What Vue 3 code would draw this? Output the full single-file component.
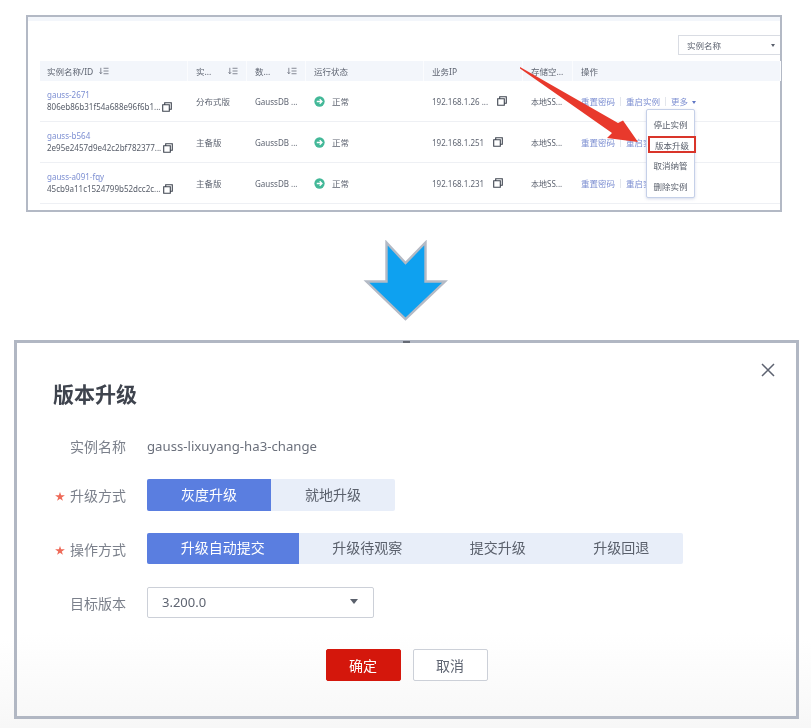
<script setup>
const columns = [
  { label: '实例名称/ID', sort: 'near' },
  { label: '实...', sort: 'end' },
  { label: '数...', sort: 'end' },
  { label: '运行状态' },
  { label: '业务IP' },
  { label: '存储空...' },
  { label: '操作' },
]

const instances = [
  { name: 'gauss-2671', id: '806eb86b31f54a688e96f6b1...', type: '分布式版', ip: '192.168.1.26 ...' },
  { name: 'gauss-b564', id: '2e95e2457d9e42c2bf782377...', type: '主备版', ip: '192.168.1.251' },
  { name: 'gauss-a091-fqy', id: '45cb9a11c1524799b52dcc2c...', type: '主备版', ip: '192.168.1.231' },
]

const menuItems = ['停止实例', '版本升级', '取消纳管', '删除实例']
const upgradeModes = ['灰度升级', '就地升级']
const operationModes = ['升级自动提交', '升级待观察', '提交升级', '升级回退']
</script>

<template>
  <div class="page">
    <section class="panel">
      <div class="panel-strip"></div>
      <div class="toolbar">
        <div class="filter-select">
          <span>实例名称</span>
          <i class="caret caret--small"></i>
        </div>
      </div>

      <div class="table">
        <div class="table-row table-row--head">
          <div
            v-for="col in columns"
            :key="col.label"
            class="table-cell"
            :class="{ 'table-cell--spread': col.sort === 'end' }"
          >
            <span>{{ col.label }}</span>
            <svg v-if="col.sort" class="sort-icon" viewBox="0 0 11 8" aria-hidden="true">
              <path d="M2 0.5V7M0.6 5.4L2 7L3.4 5.4M5 1H10.5M5 4H10.5M5 7H10.5" fill="none" stroke="#5c6270" stroke-width="0.8" />
            </svg>
          </div>
        </div>

        <div v-for="item in instances" :key="item.name" class="table-row">
          <div class="table-cell table-cell--name">
            <a class="link">{{ item.name }}</a>
            <div class="id-line">
              <span>{{ item.id }}</span>
              <svg class="copy-icon" viewBox="0 0 10 10" aria-hidden="true">
                <path d="M0.7 2.7H7.3V9.3H0.7ZM2.7 2.7V0.7H9.3V7.3H7.3" fill="none" stroke="#3f4550" stroke-width="1.1" />
              </svg>
            </div>
          </div>
          <div class="table-cell">{{ item.type }}</div>
          <div class="table-cell table-cell--latin">GaussDB ...</div>
          <div class="table-cell table-cell--status">
            <svg class="status-icon" viewBox="0 0 12 12" aria-hidden="true">
              <circle cx="6" cy="6" r="5.6" fill="#43b898" />
              <path d="M3 6H8.4M6.2 3.6L8.7 6L6.2 8.4" fill="none" stroke="#fff" stroke-width="1.4" />
            </svg>
            <span>正常</span>
          </div>
          <div class="table-cell table-cell--ip">
            <span>{{ item.ip }}</span>
            <svg class="copy-icon" viewBox="0 0 10 10" aria-hidden="true">
              <path d="M0.7 2.7H7.3V9.3H0.7ZM2.7 2.7V0.7H9.3V7.3H7.3" fill="none" stroke="#3f4550" stroke-width="1.1" />
            </svg>
          </div>
          <div class="table-cell table-cell--latin">本地SS...</div>
          <div class="table-cell table-cell--ops">
            <a class="link">重置密码</a>
            <i class="divider"></i>
            <a class="link">{{ item.name === 'gauss-2671' ? '重启实例' : '重启实' }}</a>
            <template v-if="item.name === 'gauss-2671'">
              <i class="divider"></i>
              <a class="link">更多 <i class="caret caret--link"></i></a>
            </template>
          </div>
        </div>
      </div>

      <ul class="menu">
        <li
          v-for="entry in menuItems"
          :key="entry"
          class="menu-item"
          :class="{ 'menu-item--marked': entry === '版本升级' }"
        >
          {{ entry }}
        </li>
      </ul>

      <svg class="pointer" viewBox="0 0 120 80" aria-hidden="true">
        <polygon points="0,1 98,57 103,54.5 118,76 87,72 92,67 0,2.5" fill="#e8392c" />
      </svg>
    </section>

    <div class="transition">
      <svg class="down-arrow" viewBox="0 0 85 82" aria-hidden="true">
        <polygon points="23.5,2.5 42.5,23 62.5,2.5 62.5,41.5 82,41.5 42.5,79 3.5,41.5 23.5,41.5" fill="#0ea1f0" stroke="#b4bac5" stroke-width="2.4" />
      </svg>
    </div>

    <section class="dialog">
      <i class="dialog-tick"></i>
      <svg class="dialog-close" viewBox="0 0 14 14" aria-hidden="true">
        <path d="M1 1L13 13M13 1L1 13" fill="none" stroke="#5d6270" stroke-width="1.5" />
      </svg>

      <h2 class="dialog-title">版本升级</h2>

      <div class="form-row form-row--name">
        <label class="form-label">实例名称</label>
        <span class="form-value">gauss-lixuyang-ha3-change</span>
      </div>

      <div class="form-row form-row--mode">
        <label class="form-label"><em>★</em>升级方式</label>
        <div class="segments">
          <button
            v-for="(mode, i) in upgradeModes"
            :key="mode"
            class="segment segment--wide"
            :class="{ 'segment--on': i === 0 }"
            type="button"
          >
            {{ mode }}
          </button>
        </div>
      </div>

      <div class="form-row form-row--op">
        <label class="form-label"><em>★</em>操作方式</label>
        <div class="segments">
          <button
            v-for="(mode, i) in operationModes"
            :key="mode"
            class="segment"
            :class="{ 'segment--on': i === 0 }"
            type="button"
          >
            {{ mode }}
          </button>
        </div>
      </div>

      <div class="form-row form-row--version">
        <label class="form-label">目标版本</label>
        <div class="version-select">
          <span>3.200.0</span>
          <i class="caret"></i>
        </div>
      </div>

      <div class="dialog-actions">
        <button class="btn btn--primary" type="button">确定</button>
        <button class="btn" type="button">取消</button>
      </div>
    </section>
  </div>
</template>

<style>
html,
body {
  background: #fff;
}
</style>

<style scoped>
.page {
  width: 811px;
  height: 728px;
  padding-top: 15px;
  box-sizing: border-box;
  overflow: hidden;
  background: linear-gradient(180deg, #fff 0, #fff 640px, #f7f7f7 728px);
  font-family: "Noto Sans", "Noto Sans CJK SC", sans-serif;
  color: #5f6572;
  filter: blur(0.5px);
}

/* top screenshot: instance list */
.panel {
  position: relative;
  width: 756px;
  height: 197px;
  margin-left: 26px;
  box-sizing: border-box;
  border: 2px solid #b3b9c5;
  background: #fff;
  font-size: 8.5px;
}

.panel-strip {
  height: 4px;
  background: #f3f6fb;
}

.toolbar {
  display: flex;
  justify-content: flex-end;
  height: 40px;
  padding-top: 14px;
  box-sizing: border-box;
}

.filter-select {
  display: flex;
  align-items: center;
  justify-content: space-between;
  width: 102px;
  height: 20px;
  padding: 0 5px 0 8px;
  box-sizing: border-box;
  border: 1px solid #d9dce3;
  border-right: 0;
}

.table {
  margin-left: 12px;
}

.table-row {
  display: grid;
  grid-template-columns: 148px 59px 59px 118px 99px 50px 208px;
  height: 41px;
  border-bottom: 1px solid #eef0f4;
  box-sizing: border-box;
}

.table-row--head {
  height: 20px;
  background: #f3f6fb;
  border-bottom: 0;
}

.table-row--head .table-cell {
  border-right: 1px solid #fbfcfe;
}

.table-cell {
  display: flex;
  align-items: center;
  gap: 6px;
  padding-left: 8px;
  min-width: 0;
  white-space: nowrap;
}

.table-cell:first-child {
  padding-left: 7px;
}

.table-cell--latin {
  font-size: 8px;
}

.table-cell--spread {
  justify-content: space-between;
  padding-right: 8px;
}

.table-cell--name {
  flex-direction: column;
  align-items: flex-start;
  justify-content: center;
  gap: 0;
  font-size: 8px;
  line-height: 12px;
}

.id-line {
  display: flex;
  align-items: center;
  gap: 2px;
  color: #565c68;
}

.table-cell--status {
  gap: 7px;
}

.table-cell--ip {
  gap: 9px;
  font-size: 8px;
}

.table-cell--ops {
  gap: 5px;
}

.link {
  color: #7d8fd2;
}

.divider {
  width: 1px;
  height: 9px;
  background: #e3e6ec;
}

.sort-icon {
  width: 10px;
  height: 8px;
  flex: none;
}

.copy-icon {
  width: 10px;
  height: 10px;
  flex: none;
}

.status-icon {
  width: 11px;
  height: 11px;
  flex: none;
}

.caret {
  display: inline-block;
  width: 0;
  height: 0;
  border-style: solid;
  border-width: 5px 4.5px 0;
  border-color: #5a606c transparent transparent;
}

.caret--small {
  border-width: 3px 2.5px 0;
}

.caret--link {
  margin-left: 2px;
  vertical-align: 1px;
  border-width: 3px 2.5px 0;
  border-top-color: #5f76c4;
}

.menu {
  position: absolute;
  left: 618px;
  top: 92px;
  width: 49px;
  height: 89px;
  margin: 0;
  padding: 5.5px 0 0;
  box-sizing: border-box;
  display: flex;
  flex-direction: column;
  gap: 3.7px;
  list-style: none;
  background: #fff;
  border: 1px solid #c5d0e8;
  border-radius: 2px;
  box-shadow: 0 1px 3px rgba(90, 110, 170, 0.25);
}

.menu-item {
  display: flex;
  align-items: center;
  justify-content: center;
  height: 17px;
  width: 47px;
  flex: none;
  color: #5a606c;
}

.menu-item--marked {
  width: 48px;
  margin-left: 1px;
  box-sizing: border-box;
  border: 2px solid #d9352a;
}

.pointer {
  position: absolute;
  left: 492px;
  top: 49px;
  width: 120px;
  height: 80px;
}

/* big arrow between the two screenshots */
.transition {
  display: flex;
  justify-content: center;
  align-items: flex-start;
  height: 128px;
  padding-top: 28px;
  box-sizing: border-box;
}

.down-arrow {
  width: 85px;
  height: 82px;
  flex: none;
}

/* bottom screenshot: upgrade dialog */
.dialog {
  position: relative;
  display: flex;
  flex-direction: column;
  width: 785px;
  height: 379px;
  margin-left: 14px;
  padding: 36px 0 0;
  box-sizing: border-box;
  border: 3px solid #b1b7c3;
  background: linear-gradient(180deg, #fff 0, #fff 290px, #f8f8f8 100%);
  font-size: 14px;
}

.dialog-tick {
  position: absolute;
  left: 386px;
  top: -2px;
  width: 7px;
  height: 2px;
  background: #666b75;
}

.dialog-close {
  position: absolute;
  right: 21px;
  top: 20px;
  width: 14px;
  height: 14px;
}

.dialog-title {
  margin: 0;
  padding-left: 36px;
  font-size: 21px;
  line-height: 30px;
  font-weight: 700;
  color: #3f444e;
}

.form-row {
  display: flex;
  align-items: center;
  gap: 21px;
}

.form-row--name {
  height: 32px;
  margin-top: 21px;
}

.form-row--mode {
  margin-top: 17px;
}

.form-row--op {
  margin-top: 22px;
}

.form-row--version {
  margin-top: 23px;
}

.form-label {
  width: 109px;
  text-align: right;
  color: #7b808b;
  white-space: nowrap;
}

.form-label em {
  margin-right: 5px;
  font-style: normal;
  font-size: 10px;
  vertical-align: 1px;
  color: #ee6a58;
}

.form-value {
  font-size: 13.2px;
  color: #6b707c;
}

.segments {
  display: flex;
  border-radius: 2px;
  overflow: hidden;
  background: #e8eef9;
}

.segment {
  height: 31px;
  padding: 0 33.75px 3px;
  border: 0;
  background: transparent;
  font: inherit;
  color: #5a606c;
  white-space: nowrap;
}

.segment--wide {
  height: 32px;
  padding: 0 34px 3px;
}

.segment--on {
  background: #5a7ee0;
  color: #fff;
}

.version-select {
  display: flex;
  align-items: center;
  justify-content: space-between;
  width: 227px;
  height: 31px;
  padding: 0 15px 2px 14px;
  box-sizing: border-box;
  border: 1px solid #ccd0d8;
  border-radius: 2px;
  background: #fff;
  font-size: 13px;
  color: #5f6572;
}

.dialog-actions {
  display: flex;
  justify-content: center;
  gap: 12px;
  margin-top: 31px;
}

.btn {
  width: 75px;
  height: 32px;
  padding: 0;
  border: 1px solid #ccd0d8;
  border-radius: 2px;
  background: #fff;
  font: inherit;
  color: #5f6572;
}

.btn--primary {
  background: #d4170c;
  border-color: #d4170c;
  color: #fff;
}
</style>
